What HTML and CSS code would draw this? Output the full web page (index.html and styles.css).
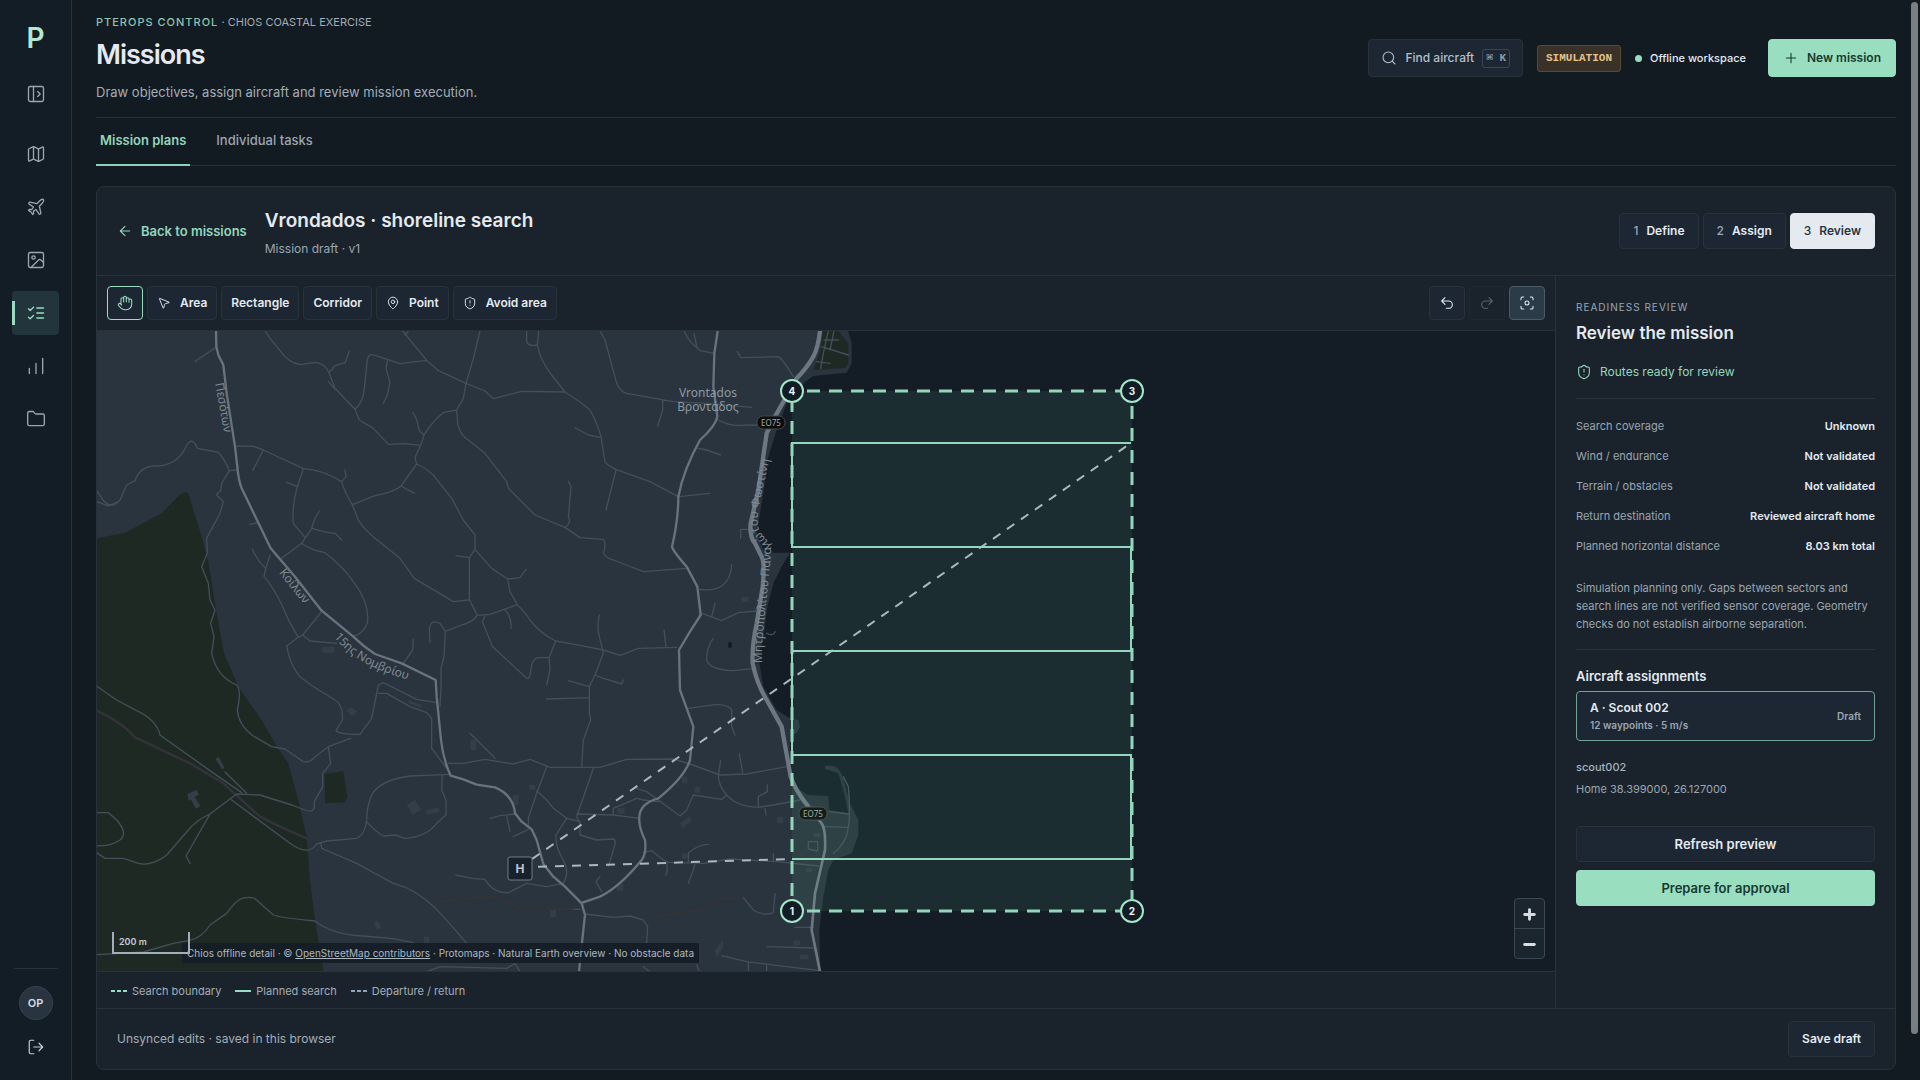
FILE: index.html
```html
<!DOCTYPE html>
<html lang="en">
<head>
<meta charset="utf-8">
<title>Missions · Pterops Control</title>
<meta name="viewport" content="width=device-width, initial-scale=1">
<link rel="stylesheet" href="styles.css">
</head>
<body>
<div class="app">
  <aside class="rail">
    <a class="logo" href="#" aria-label="Pterops home">P</a>
    <button class="rail-item rail-toggle" type="button" aria-label="Expand sidebar"><svg class="icon" viewBox="0 0 24 24"><rect x="3" y="3" width="18" height="18" rx="2"/><path d="M9 3v18M14 9l3 3-3 3"/></svg></button>
    <nav class="rail-nav" aria-label="Main">
      <a class="rail-item" href="#" aria-label="Map"><svg class="icon" viewBox="0 0 24 24"><path d="M14.106 5.553a2 2 0 0 0 1.788 0l3.659-1.83A1 1 0 0 1 21 4.619v12.764a1 1 0 0 1-.553.894l-4.553 2.277a2 2 0 0 1-1.788 0l-4.212-2.106a2 2 0 0 0-1.788 0l-3.659 1.83A1 1 0 0 1 3 19.381V6.618a1 1 0 0 1 .553-.894l4.553-2.277a2 2 0 0 1 1.788 0zM15 5.764v15M9 3.236v15"/></svg></a>
      <a class="rail-item" href="#" aria-label="Aircraft"><svg class="icon" viewBox="0 0 24 24"><path d="M17.8 19.2 16 11l3.5-3.5C21 6 21.5 4 21 3c-1-.5-3 0-4.5 1.500L13 8 4.800 6.200c-.5-.1-.9.1-1.100.5l-.3.5c-.2.5-.1 1 .3 1.300L9 12l-2 3H4l-1 1 3 2 2 3 1-1v-3l3-2 3.500 5.300c.3.4.8.5 1.300.3l.5-.2c.4-.3.6-.7.500-1.200z"/></svg></a>
      <a class="rail-item" href="#" aria-label="Imagery"><svg class="icon" viewBox="0 0 24 24"><rect x="3" y="3" width="18" height="18" rx="2"/><circle cx="9" cy="9" r="2"/><path d="m21 15-3.086-3.086a2 2 0 0 0-2.828 0L6 21"/></svg></a>
      <a class="rail-item is-active" href="#" aria-label="Missions" aria-current="page"><svg class="icon" viewBox="0 0 24 24"><path d="m3 17 2 2 4-4M3 7l2 2 4-4M13 6h8M13 12h8M13 18h8"/></svg></a>
      <a class="rail-item" href="#" aria-label="Reports"><svg class="icon" viewBox="0 0 24 24"><path d="M4 21v-6M12 21V9M20 21V3"/></svg></a>
      <a class="rail-item" href="#" aria-label="Files"><svg class="icon" viewBox="0 0 24 24"><path d="M20 20a2 2 0 0 0 2-2V8a2 2 0 0 0-2-2h-7.900a2 2 0 0 1-1.690-.9L9.600 3.900A2 2 0 0 0 7.930 3H4a2 2 0 0 0-2 2v13a2 2 0 0 0 2 2Z"/></svg></a>
    </nav>
    <div class="rail-foot">
      <span class="avatar">OP</span>
      <button class="signout" type="button" aria-label="Sign out"><svg class="icon" viewBox="0 0 24 24"><path d="M9 21H5a2 2 0 0 1-2-2V5a2 2 0 0 1 2-2h4M16 17l5-5-5-5M21 12H9"/></svg></button>
    </div>
  </aside>

  <main class="main">
    <header class="page-head">
      <div>
        <p class="eyebrow"><strong>PTEROPS CONTROL</strong> <span>· CHIOS COASTAL EXERCISE</span></p>
        <h1>Missions</h1>
        <p class="lede">Draw objectives, assign aircraft and review mission execution.</p>
      </div>
      <div class="head-actions">
        <button class="find" type="button"><svg class="icon" viewBox="0 0 24 24"><circle cx="11" cy="11" r="8"/><path d="m21 21-4.300-4.300"/></svg>Find aircraft <kbd>⌘ K</kbd></button>
        <span class="badge">SIMULATION</span>
        <span class="workspace">Offline workspace</span>
        <button class="primary new-mission" type="button"><svg class="icon" viewBox="0 0 24 24"><path d="M5 12h14M12 5v14"/></svg>New mission</button>
      </div>
    </header>

    <nav class="tabs" aria-label="Mission views">
      <a class="tab is-active" href="#" aria-current="page">Mission plans</a>
      <a class="tab" href="#">Individual tasks</a>
    </nav>

    <section class="card">
      <header class="card-head">
        <a class="back" href="#"><svg class="icon" viewBox="0 0 24 24"><path d="m12 19-7-7 7-7M19 12H5"/></svg>Back to missions</a>
        <div class="card-title">
          <h2>Vrondados · shoreline search</h2>
          <p>Mission draft · v1</p>
        </div>
        <div class="steps">
          <button class="btn" type="button"><span>1</span>Define</button>
          <button class="btn" type="button"><span>2</span>Assign</button>
          <button class="btn is-current" type="button" aria-current="step"><span>3</span>Review</button>
        </div>
      </header>

      <div class="workspace-grid">
        <div class="map-col">
          <div class="toolbar">
            <button class="btn tool square is-on" type="button" aria-label="Pan"><svg class="icon" viewBox="0 0 24 24"><path d="M18 11V6a2 2 0 0 0-4 0M14 10V4a2 2 0 0 0-4 0v2M10 10.500V6a2 2 0 0 0-4 0v8M18 8a2 2 0 1 1 4 0v6a8 8 0 0 1-8 8h-2c-2.800 0-4.500-.86-5.990-2.340l-3.600-3.600a2 2 0 0 1 2.830-2.820L7 15"/></svg></button>
            <button class="btn tool" type="button"><svg class="icon" viewBox="0 0 24 24"><path d="M4.037 4.688a.495.495 0 0 1 .651-.651l16 6.500a.5.5 0 0 1-.063.947l-6.124 1.580a2 2 0 0 0-1.438 1.435l-1.579 6.126a.5.5 0 0 1-.947.063z"/></svg>Area</button>
            <button class="btn tool" type="button">Rectangle</button>
            <button class="btn tool" type="button">Corridor</button>
            <button class="btn tool" type="button"><svg class="icon" viewBox="0 0 24 24"><path d="M20 10c0 4.993-5.539 10.193-7.399 11.799a1 1 0 0 1-1.202 0C9.539 20.193 4 14.993 4 10a8 8 0 0 1 16 0"/><circle cx="12" cy="10" r="3"/></svg>Point</button>
            <button class="btn tool" type="button"><svg class="icon" viewBox="0 0 24 24"><path d="M20 13c0 5-3.500 7.500-7.660 8.950a1 1 0 0 1-.67-.01C7.500 20.500 4 18 4 13V6a1 1 0 0 1 1-1c2 0 4.500-1.200 6.240-2.720a1.170 1.170 0 0 1 1.520 0C14.510 3.810 17 5 19 5a1 1 0 0 1 1 1zM12 8v4M12 16h.01"/></svg>Avoid area</button>
            <div class="tool-end">
              <button class="btn tool square" type="button" aria-label="Undo"><svg class="icon" viewBox="0 0 24 24"><path d="M9 14 4 9l5-5M4 9h10.500a5.500 5.500 0 0 1 0 11H11"/></svg></button>
              <button class="btn tool square" type="button" aria-label="Redo" disabled><svg class="icon" viewBox="0 0 24 24"><path d="m15 14 5-5-5-5M20 9H9.500a5.500 5.500 0 0 0 0 11H13"/></svg></button>
              <button class="btn tool square is-lit" type="button" aria-label="Fit to mission"><svg class="icon" viewBox="0 0 24 24"><circle cx="12" cy="12" r="3"/><path d="M3 7V5a2 2 0 0 1 2-2h2M17 3h2a2 2 0 0 1 2 2v2M21 17v2a2 2 0 0 1-2 2h-2M7 21H5a2 2 0 0 1-2-2v-2"/></svg></button>
            </div>
          </div>

          <div class="map">
            <svg class="map-canvas" viewBox="97 331 1458 640" preserveAspectRatio="xMinYMin slice" role="img" aria-label="Map of Vrontados with the planned search area">
              <!-- land, parks and roads are drawn on a tripled grid -->
              <g transform="translate(80 320) scale(.333333)">
                <path class="land" d="M0 0H2295L2315 70V130L2300 158 2200 168 2172 188 2120 250 2090 330 2062 420 2050 520 2030 640 2050 690 2070 698H2130L2105 740 2080 790 2062 860 2050 950 2035 1010 2050 1100 2090 1170 2130 1195 2155 1200 2160 1220 2150 1238 2130 1250V1330L2145 1400 2185 1425 2245 1428 2248 1470 2305 1480 2295 1430 2275 1360 2235 1347Q2230 1332 2262 1338 2280 1345 2290 1375L2310 1450 2335 1500V1545L2315 1600 2260 1620 2245 1650 2230 1730 2218 1830 2222 1990H0Z"/>
                <path class="park" d="M0 660 50 655 135 638 245 580 295 528Q315 512 325 520L362 640 385 725 410 880 432 1000 475 1100 545 1200 590 1280 625 1330 655 1440 680 1550 690 1680 705 1800 735 1980H0ZM734 1362 790 1353 802 1430 795 1447 735 1450ZM2228 33H2275L2305 70V128L2296 144 2200 150 2222 90Z"/>
                <g class="building">
                  <path d="M727 980h36v18h-36zM798 1170l16-8 18 12-16 16zM980 1455l24-16 20 30-26 16zM1040 1470l38-8v14l-38 8zM322 1422l28-12 6 14-12 8 18 26-14 8-16-28-6 4zM406 1316l10-6 18 34-8 4zM880 1808l14-6 10 24h-14zM1032 1850h16v18h-16zM1172 1260h16v30h-16zM1410 1765h18v26h-18zM1348 1395h18v14h-18zM1298 1425h18v30h-18zM1800 1510l30-22 4 14-26 24zM2092 1490h18v20h-18zM1984 830h22v16h-22zM1806 1370h16v18h-16zM1844 1400h16v18h-16zM1612 1465h22v16h-22zM1806 1600h16v16h-16zM1610 1692h20v20h-20zM2200 1538h22v14h-22zM2178 1645h18v12h-18zM1905 1890l24-30v20l-18 34zM2140 1862h20v14h-20zM2160 1904h26v14h-26zM985 1140l40 14v10l-40-14z"/>
                </g>
                <g class="track">
                  <path d="M50 1172Q130 1210 165 1252L330 1330 430 1390 490 1445 540 1490 600 1520 680 1555M1060 1745 1240 1730 1320 1765 1500 1768M1720 1790 1860 1770 1920 1735 1990 1735"/>
                </g>
                <g class="minor">
                  <path d="M556 33 570 55 600 92Q625 128 660 134L705 127Q735 130 747 158L765 205 825 268 838 300 880 325 925 373 975 371 1022 376 1032 345Q1060 300 1092 277L1130 270 1150 235 1158 190 1180 115 1200 33"/>
                  <path d="M747 158 765 137 795 128 808 93M745 185 768 210M825 268Q850 245 853 205L862 120Q865 98 885 106L960 131 1040 121M922 122 918 145 930 187 922 225 910 250M968 33 1040 121 1075 152 1158 190 1215 213 1240 236 1325 214 1455 216M975 45 985 33M1340 33V65Q1345 80 1372 75M1376 33 1372 75Q1380 120 1415 165L1455 216 1500 246 1530 270Q1550 305 1563 350L1575 425Q1580 435 1607 448L1710 485 1795 530"/>
                  <path d="M1130 270 1133 310Q1140 345 1165 360L1215 400 1280 485 1285 505 1365 585 1455 622 1500 653 1570 658Q1580 670 1570 700 1580 715 1600 720L1690 755 1820 745M1455 622Q1475 610 1465 590L1473 500 1465 483M998 277Q1010 290 1018 332L1032 345M1022 376 1005 412 1010 432 963 498Q945 515 885 527L817 554M963 498 1003 520"/>
                  <path d="M1010 432Q1050 450 1070 478L1115 535 1150 600 1185 645V688L1168 713V838L1192 886 1230 883 1312 854 1340 885 1350 900Q1380 940 1427 963L1500 976 1570 990 1620 1006 1675 985 1790 982M1185 688 1235 745 1283 777 1320 773 1338 748M1283 777 1290 815 1312 854M1128 707 1168 713M1192 886Q1180 905 1145 915L1096 934 1092 1010 1083 1045V1100L1080 1160M1096 934 1080 910Q1050 895 1048 930L1050 968M1275 870Q1295 890 1293 925M1215 888 1207 905 1238 980 1340 1075Q1350 1078 1352 1055 1355 1015 1375 1013H1407L1427 963M1407 1013 1410 1050 1400 1095"/>
                  <path d="M470 378 520 379 550 390 670 446Q730 450 785 485 795 520 817 554L835 600Q850 625 885 655L960 715 1003 775 1120 845 1165 840M550 390 518 452M670 446 652 500Q635 560 640 610L675 652M620 487 652 500M785 485 798 470 795 450M605 715 665 670 695 625 705 595 718 573M695 625 740 637 765 640 785 660M665 670Q690 690 735 698 790 740 820 785 870 850 862 910 850 940 823 948M517 687Q530 720 557 745L570 705M557 745 552 770Q580 800 608 860L628 905 655 952 620 978 625 1000Q635 1040 660 1070L700 1100 765 1140Q790 1155 787 1200L768 1232Q775 1243 840 1243L875 1195 895 1095 910 1088 1010 1138 1070 1148M655 952 668 945 725 875M668 945 690 963 770 970M895 1120 920 1120 990 1160 1040 1178 1055 1195V1285L1100 1345M510 613 535 608M1000 958 998 990 970 1030M345 124 408 82"/>
                  <path d="M50 512 62 530Q90 575 120 540L140 495 165 482Q180 440 220 438 290 440 318 380 335 345 352 385L410 396Q425 400 448 452L470 450M50 545 85 558 115 545M448 452 425 490 423 510 410 525 430 545 420 580 380 655 382 700 365 740 385 790 390 840 405 870 392 910 402 950 395 1000Q410 1070 470 1095 485 1110 472 1170 475 1215 520 1248L575 1280 615 1287 670 1325Q690 1330 705 1310L745 1280 812 1255M745 1280 752 1330 728 1360V1400L703 1445V1460Q700 1480 675 1470L635 1455 540 1425 470 1422 390 1482Q350 1500 325 1530L260 1605Q215 1640 175 1630L130 1615H75L50 1598M390 1482 318 1608 330 1630M50 1098Q80 1120 110 1140L170 1172Q230 1200 240 1245L380 1345 485 1418M435 1356 500 1420M50 1478H85L110 1500Q145 1540 120 1560 90 1580 50 1577M455 1440 630 1570Q685 1610 710 1572L740 1563 830 1555Q855 1545 860 1500 860 1460 875 1425 900 1380 990 1368L1110 1363M1087 1365 1085 1410 1098 1440V1485L1070 1510Q1040 1550 975 1555L945 1545 910 1548Q880 1530 860 1505M722 1570 725 1585 830 1630 940 1690Q1020 1710 1090 1790L1130 1835 1160 1870"/>
                  <path d="M50 1904 190 1896 280 1870 325 1862Q365 1855 390 1815L440 1780Q475 1730 500 1733 520 1730 530 1740L580 1785Q595 1792 705 1803 760 1845 850 1848L940 1856 1000 1868M1040 1955 1080 1940 1280 1945 1305 1930 1320 1955M1105 1330H1150L1215 1318 1300 1332 1350 1318 1410 1342H1560L1640 1318 1780 1317 1830 1332 1920 1365 2000 1362 2120 1340M1170 1240 1245 1315M1400 1340 1370 1420 1345 1495V1520M1370 1412 1400 1440 1420 1465 1460 1495 1500 1505M1460 1495 1428 1545Q1425 1580 1450 1620 1470 1660 1450 1690M1230 1495 1260 1487 1305 1482M1280 1487 1290 1535M1300 1550 1345 1528M1127 1665 1180 1676 1215 1678Q1240 1720 1285 1718L1340 1690 1400 1700 1450 1690M1540 1345 1490 1490 1500 1510V1545L1550 1560 1600 1557Q1610 1560 1603 1580L1585 1640M1490 1482 1600 1485 1680 1495M1600 1485V1465L1670 1435 1690 1440 1735 1445M1670 1405 1700 1415 1735 1440 1800 1488 1820 1470 1840 1425 1925 1438 1940 1425M1915 1365Q1915 1400 1945 1430 1975 1460 2035 1462L2080 1455 2160 1440M1922 1322 1915 1365M1978 1302 1988 1358M2035 1460V1430L2062 1415V1395M2055 1465 2058 1485"/>
                  <path d="M1690 1598 1715 1592 1750 1620 1765 1627 1870 1630 1950 1617 2090 1625 2215 1638M1825 1625V1600Q1850 1575 1885 1573M1845 1630 1840 1650 1825 1690M1760 1625 1762 1650 1758 1665M2080 1625V1600M1565 1715 1548 1685 1560 1670M1515 1782 1600 1792 1650 1788 1690 1800 1703 1820 1700 1870M1500 1768H1480M1990 1733 2020 1770Q2050 1790 2080 1778M2080 1775 2085 1720M2145 1822H2200M2062 1880 2200 1884M1925 1907 2000 1925 2120 1940 2220 1952M2005 1925V1955M2060 1935V1955M1850 1935 1858 1955M1690 1940 1710 1955"/>
                  <path d="M1558 885Q1550 920 1558 950L1570 1000 1545 1065 1528 1100V1180L1532 1200 1510 1260 1505 1340M1545 1065 1570 1075 1625 1092 1630 1080M1465 1082 1528 1100M1400 1137 1528 1133M1752 930 1758 980M1560 33 1575 60 1610 190Q1620 215 1640 220L1780 245 1880 250 2015 262M1748 240V270L1733 318M1608 450 1578 570M1485 323 1525 345 1560 352M1910 297Q1940 315 1970 316L2035 315M1855 385 1880 390 1922 405M1797 530 1890 520M1812 33Q1830 70 1848 80L1860 92 1903 100M1842 40 1850 80M1972 95 1982 113 2095 110Q2110 120 2140 170M1825 1165 1910 1153Q1950 1155 1955 1170V1220L1965 1245M1858 808Q1950 820 1955 735M1860 878 1925 902 1975 878 2030 873M1895 890 1905 850M2030 1045 1960 1052Q1890 1050 1880 1020 1880 980 1900 955M2060 940Q2080 950 2085 935M2005 628H1982V655M2234 1520 2305 1522Q2312 1480 2305 1400L2290 1370M2248 1475 2305 1482M2305 1522Q2300 1570 2260 1600M2185 1565h28v28l-28-6zM2245 33 2232 90 2222 145M2225 80 2305 105M2232 60 2275 60M2210 125 2250 130M2262 33 2250 90"/>
                </g>
                <g class="main-road">
                  <path d="M408 33 409 80 415 105 430 135 440 220 465 380 472 440Q475 480 485 505L572 685 645 770 725 872 820 950Q850 980 885 1002L965 1030 1067 1080 1070 1130 1083 1260Q1090 1320 1112 1367L1150 1378 1190 1394 1245 1402Q1300 1425 1305 1480L1325 1505 1355 1528 1370 1560 1390 1632 1420 1670 1455 1700 1505 1750 1515 1785 1510 1830 1497 1955"/>
                  <path d="M1913 33 1903 100 1900 200 1912 290Q1905 320 1860 360 1810 450 1795 530 1795 600 1776 680 1780 695 1820 740L1852 800 1862 885 1830 935 1797 990 1800 1110 1840 1220 1830 1320Q1815 1370 1735 1435 1680 1450 1678 1490 1675 1520 1695 1560 1700 1600 1685 1620 1620 1700 1560 1730L1507 1748"/>
                </g>
                <g class="shore-road">
                  <path d="M2220 33Q2215 80 2200 110 2180 145 2150 175L2085 290 2060 340Q2045 440 2035 510L2012 610Q2008 650 2025 670L2045 710Q2055 730 2048 800L2030 910Q2015 980 2018 1030 2030 1090 2060 1140L2105 1220 2132 1370Q2145 1410 2185 1460"/>
                  <path class="shore-thin" d="M2180 1455 2225 1510Q2238 1530 2235 1590L2205 1720 2195 1830 2220 1955"/>
                </g>
              </g>

              <g class="place">
                <text x="708" y="397">Vrontados</text>
                <text x="708" y="411">Βροντάδος</text>
              </g>
              <path id="r1" class="guide" d="M215 384 Q219 403 227 450"/>
              <path id="r2" class="guide" d="M279 573 Q293 591 312 613"/>
              <path id="r3" class="guide" d="M334 637 C352 659 375 672 425 684"/>
              <path id="r4" class="guide" d="M762 663 C761 640 768 590 771 555 C773 535 755 540 758 515 C760 495 767 475 775 430"/>
              <g class="street">
                <text><textPath href="#r1">Πεσότων</textPath></text>
                <text><textPath href="#r2">Κοίλων</textPath></text>
                <text><textPath href="#r3">15ης Νομβρίου</textPath></text>
                <text><textPath href="#r4">Μητροπολίτου Παναγιώτου Φωστίνη</textPath></text>
              </g>
              <g class="shield">
                <rect x="757" y="416" width="28" height="13" rx="6" ry="6"/><text x="771" y="426">EO75</text>
              </g>
              <g class="shield">
                <rect x="799" y="807" width="28" height="13" rx="6" ry="6"/><text x="813" y="817">EO75</text>
              </g>
              <rect class="pond" x="728" y="642" width="4" height="6" rx="2"/>

              <rect class="area" x="792" y="391" width="340" height="520"/>
              <path class="transit" d="M532 867 792 859M1131 443 532 859"/>
              <path class="boundary" d="M804 391H1120M1132 403V899M804 911H1120M792 899V403"/>
              <path class="sweep" d="M792 859H1131V755H792V651H1131V547H792V443H1131"/>
              <g class="vertex">
                <circle cx="792" cy="911" r="11"/><text x="792" y="915">1</text>
                <circle cx="1132" cy="911" r="11"/><text x="1132" y="915">2</text>
                <circle cx="1132" cy="391" r="11"/><text x="1132" y="395">3</text>
                <circle cx="792" cy="391" r="11"/><text x="792" y="395">4</text>
              </g>
              <g class="home">
                <rect x="508" y="857" width="24" height="23" rx="2"/><text x="520" y="873">H</text>
              </g>
            </svg>
            <p class="credit">Chios offline detail · © <a href="#">OpenStreetMap contributors</a> · Protomaps · Natural Earth overview · No obstacle data</p>
            <div class="scale">200 m</div>
            <div class="zoom">
              <button type="button" aria-label="Zoom in"><svg viewBox="0 0 30 29"><path d="M15 10v10M10 15h10"/></svg></button>
              <button type="button" aria-label="Zoom out"><svg viewBox="0 0 30 29"><path d="M10 15h10"/></svg></button>
            </div>
          </div>

          <ul class="legend">
            <li><svg viewBox="0 0 16 4" class="key key-green"><path d="M0 2h16" stroke-dasharray="4 2"/></svg>Search boundary</li>
            <li><svg viewBox="0 0 16 4" class="key key-green"><path d="M0 2h16"/></svg>Planned search</li>
            <li><svg viewBox="0 0 16 4" class="key key-grey"><path d="M0 2h16" stroke-dasharray="4 2"/></svg>Departure / return</li>
          </ul>
        </div>

        <aside class="panel">
          <p class="panel-label">READINESS REVIEW</p>
          <h2>Review the mission</h2>
          <p class="status"><svg class="icon" viewBox="0 0 24 24"><path d="M20 13c0 5-3.500 7.500-7.660 8.950a1 1 0 0 1-.67-.01C7.500 20.500 4 18 4 13V6a1 1 0 0 1 1-1c2 0 4.500-1.200 6.240-2.720a1.170 1.170 0 0 1 1.520 0C14.510 3.810 17 5 19 5a1 1 0 0 1 1 1zM12 8v4M12 16h.01"/></svg>Routes ready for review</p>
          <dl class="facts">
            <div><dt>Search coverage</dt><dd>Unknown</dd></div>
            <div><dt>Wind / endurance</dt><dd>Not validated</dd></div>
            <div><dt>Terrain / obstacles</dt><dd>Not validated</dd></div>
            <div><dt>Return destination</dt><dd>Reviewed aircraft home</dd></div>
            <div><dt>Planned horizontal distance</dt><dd>8.03 km total</dd></div>
          </dl>
          <p class="note">Simulation planning only. Gaps between sectors and search lines are not verified sensor coverage. Geometry checks do not establish airborne separation.</p>
          <h3>Aircraft assignments</h3>
          <button class="assignment" type="button">
            <span><strong>A · Scout 002</strong><small>12 waypoints · 5 m/s</small></span>
            <small>Draft</small>
          </button>
          <p class="callsign">scout002</p>
          <p class="home-pos">Home 38.399000, 26.127000</p>
          <div class="panel-actions">
            <button class="btn wide" type="button">Refresh preview</button>
            <button class="primary wide" type="button">Prepare for approval</button>
          </div>
        </aside>
      </div>

      <footer class="card-foot">
        <p>Unsynced edits · saved in this browser</p>
        <button class="btn save" type="button">Save draft</button>
      </footer>
    </section>
  </main>
  <div class="scroll-thumb" aria-hidden="true"></div>
</div>
</body>
</html>
```
FILE: styles.css
```css
:root {
  --bg: #121a22;
  --rail: #131d25;
  --surface: #1a232c;
  --raised: #1c2733;
  --line: #27323b;
  --text: #e4eaf0;
  --muted: #9ba6b1;
  --mint: #98ddbf;
}
* { box-sizing: border-box; }
body, h1, h2, h3, p, ul, dl, dd { margin: 0; padding: 0; }
body {
  background: var(--bg);
  color: var(--text);
  font: 400 12px/18px Inter, "Liberation Sans", sans-serif;
}
button { font: inherit; color: inherit; cursor: pointer; }
a { color: inherit; text-decoration: none; }
.icon {
  width: 16px;
  height: 16px;
  flex: none;
  fill: none;
  stroke: currentColor;
  stroke-width: 1.6;
  stroke-linecap: round;
  stroke-linejoin: round;
}
.app { display: flex; height: 100vh; }

/* Navigation rail */
.rail {
  width: 72px;
  flex: none;
  display: flex;
  flex-direction: column;
  align-items: center;
  padding: 20px 12px 22px;
  background: var(--rail);
  border-right: 1px solid var(--line);
}
.logo { font-size: 28px; line-height: 36px; font-weight: 600; color: #b5e8cf; }
.rail-item {
  position: relative;
  display: flex;
  align-items: center;
  justify-content: center;
  width: 47px;
  height: 44px;
  padding: 0;
  border: 0;
  border-radius: 4px;
  background: none;
  color: var(--muted);
}
.rail-item .icon { width: 20px; height: 20px; }
.rail-toggle { margin-top: 16px; }
.rail-nav { display: flex; flex-direction: column; gap: 9px; margin-top: 16px; }
.rail-item.is-active { background: #22353d; color: var(--mint); }
.rail-item.is-active::before {
  content: "";
  position: absolute;
  left: 0;
  top: 10px;
  bottom: 10px;
  width: 3px;
  background: var(--mint);
}
.rail-foot {
  margin-top: auto;
  width: 44px;
  padding-top: 17px;
  border-top: 1px solid var(--line);
  display: flex;
  flex-direction: column;
  align-items: center;
  gap: 16px;
}
.avatar {
  width: 34px;
  height: 34px;
  border-radius: 50%;
  border: 1px solid #35434e;
  background: #283540;
  font-size: 11px;
  line-height: 32px;
  font-weight: 600;
  text-align: center;
  color: #d5dce3;
}
.signout { display: flex; padding: 2px; border: 0; background: none; color: #c3ccd4; }
.signout .icon { width: 18px; height: 18px; }

/* Page header */
.main { flex: 1; min-width: 0; padding: 0 24px 56px; overflow-y: auto; scrollbar-width: none; }
.page-head {
  display: flex;
  align-items: center;
  justify-content: space-between;
  gap: 24px;
  padding: 14px 0 15px;
  border-bottom: 1px solid var(--line);
}
.eyebrow { font-size: 11px; line-height: 16px; color: #a3adb7; }
.eyebrow strong { font-weight: 500; letter-spacing: 1px; color: #8fc5b0; }
h1 { margin-top: 8px; font-size: 27px; line-height: 34px; font-weight: 600; letter-spacing: -1px; }
.lede { margin-top: 10px; font-size: 13px; line-height: 20px; color: #a3adb7; }
.head-actions { display: flex; align-items: center; gap: 14px; }
.find {
  display: flex;
  align-items: center;
  gap: 8px;
  height: 38px;
  padding: 0 12px;
  border: 1px solid var(--line);
  border-radius: 4px;
  background: var(--raised);
  font-weight: 500;
  color: #b5bfc8;
}
.find kbd {
  padding: 0 3px;
  border: 1px solid #3a4651;
  border-radius: 3px;
  font: 600 11px/17px "Liberation Mono", "DejaVu Sans Mono", monospace;
  color: #8f9ba6;
}
.badge {
  padding: 0 8px;
  border: 1px solid #574a35;
  border-radius: 3px;
  background: #3a3228;
  font: 700 11px/25px "Liberation Mono", monospace;
  color: #e5c48a;
}
.workspace { display: flex; align-items: center; gap: 8px; margin-right: 8px; font-size: 11px; font-weight: 500; }
.workspace::before { content: ""; width: 7px; height: 7px; border-radius: 50%; background: var(--mint); }
.primary {
  border: 1px solid var(--mint);
  border-radius: 4px;
  background: #98debf;
  color: #163a30;
  font-size: 12px;
  font-weight: 600;
}
.new-mission { display: flex; align-items: center; gap: 8px; height: 38px; padding: 0 14px; }

/* Tabs */
.tabs { display: flex; gap: 22px; border-bottom: 1px solid var(--line); }
.tab {
  margin-bottom: -1px;
  padding: 12px 4px 14px;
  border-bottom: 2px solid transparent;
  font-size: 13px;
  line-height: 20px;
  font-weight: 500;
  color: var(--muted);
}
.tab.is-active { border-color: #8fd0b8; font-weight: 600; color: #93d6bb; }

/* Mission card */
.card { margin-top: 20px; border: 1px solid var(--line); border-radius: 8px; background: var(--surface); overflow: hidden; }
.card-head {
  display: flex;
  align-items: center;
  gap: 18px;
  padding: 16px 20px;
  border-bottom: 1px solid var(--line);
}
.back { display: flex; align-items: center; gap: 8px; font-size: 13px; font-weight: 600; color: #93d6bb; }
.card-title { padding-top: 4px; }
.card-title h2 { font-size: 19px; line-height: 28px; font-weight: 600; }
.card-title p { margin-top: 4px; line-height: 20px; color: var(--muted); }
.steps { display: flex; gap: 4px; margin-left: auto; }
.btn {
  display: flex;
  align-items: center;
  justify-content: center;
  gap: 8px;
  height: 36px;
  padding: 0 13px;
  border: 1px solid var(--line);
  border-radius: 4px;
  background: var(--raised);
  font-weight: 600;
}
.steps span { font-weight: 500; color: var(--muted); }
.steps .is-current, .steps .is-current span { color: #2b3640; }
.steps .is-current { border-color: #e4eaf0; background: #e4eaf0; }

.workspace-grid { display: grid; grid-template-columns: minmax(0, 1fr) 340px; }
.toolbar { display: flex; gap: 4px; padding: 10px; border-bottom: 1px solid var(--line); }
.tool { gap: 9px; height: 34px; padding: 0 9px; }
.tool .icon { width: 14px; height: 14px; }
.square { width: 36px; padding: 0; }
.square .icon { width: 16px; height: 16px; }
.tool.is-on { border-color: var(--mint); color: var(--mint); }
.tool.is-lit { border-color: #4a5b67; background: #2b3c48; }
.tool:disabled { background: none; border-color: #1f2932; color: #58636d; }
.tool-end { display: flex; gap: 4px; margin-left: auto; }

/* Map */
.map { position: relative; height: 640px; background: #141d26; overflow: hidden; }
.map-canvas { display: block; width: 100%; height: 100%; }
.land { fill: #29343e; }
.park { fill: #1f2924; }
.building { fill: #333e48; }
.pond { fill: #141d26; }
.track, .minor, .main-road, .shore-road { fill: none; stroke-linejoin: round; stroke-linecap: round; }
.track { stroke: #333339; stroke-width: 7; }
.minor { stroke: #434f59; stroke-width: 4; }
.main-road { stroke: #68737d; stroke-width: 7; }
.shore-road { stroke: #6d7781; stroke-width: 13; }
.shore-thin { stroke-width: 8; }
.map-canvas text { font-family: "Noto Sans", sans-serif; text-anchor: middle; }
.place text { font-size: 12px; fill: #8e99a3; }
.guide { fill: none; }
.map-canvas .street text { font-size: 12px; text-anchor: start; fill: #7f8a94; }
.shield rect { fill: #0b0d0f; stroke: #4a4644; }
.shield text { font-size: 8px; fill: #a8a8a6; }
.area { fill: #5fd0a0; fill-opacity: .09; }
.boundary { fill: none; stroke: #93d6bb; stroke-width: 3; stroke-dasharray: 13 9; stroke-dashoffset: -3; }
.sweep { fill: none; stroke: #93d6bb; stroke-width: 2; }
.transit { fill: none; stroke: #aab8c0; stroke-width: 2; stroke-dasharray: 9 8; stroke-dashoffset: -6; }
.vertex circle { fill: #121c25; stroke: #a5e6cb; stroke-width: 2; }
.map-canvas .vertex text, .map-canvas .home text { font-family: Inter, sans-serif; font-weight: 700; fill: #eef3f7; }
.vertex text { font-size: 10px; }
.home rect { fill: #17222d; stroke: #707c88; }
.map-canvas .home text { font-size: 12px; fill: #b7c5d0; }
.scale {
  position: absolute;
  left: 15px;
  bottom: 17px;
  width: 78px;
  height: 22px;
  padding-left: 5px;
  border: 2px solid #a3aeb8;
  border-top: 0;
  font-size: 9px;
  line-height: 20px;
  font-weight: 600;
  color: #c3ccd4;
}
.credit {
  position: absolute;
  left: 85px;
  bottom: 8px;
  padding: 0 5px;
  background: rgba(20, 29, 38, .9);
  font-size: 10px;
  line-height: 20px;
  color: #adb7c0;
}
.credit a { text-decoration: underline; }
.zoom {
  position: absolute;
  right: 10px;
  bottom: 12px;
  width: 31px;
  border: 1px solid #3b4852;
  border-radius: 4px;
  background: #1a252e;
}
.zoom button { display: block; width: 100%; height: 29px; padding: 0; border: 0; background: none; }
.zoom button + button { height: 30px; border-top: 1px solid #3b4852; }
.zoom svg { display: block; width: 29px; height: 28px; fill: none; stroke: #d8dddf; stroke-width: 3; stroke-linecap: round; }
.legend {
  display: flex;
  gap: 14px;
  padding: 10px 14px 8px;
  border-top: 1px solid var(--line);
  list-style: none;
  font-size: 11px;
  color: #a3adb7;
}
.legend li { display: flex; align-items: center; gap: 5px; }
.key { width: 16px; height: 4px; stroke-width: 2; }
.key-green { stroke: var(--mint); }
.key-grey { stroke: #8fa5b5; }

/* Review panel */
.panel { padding: 23px 20px; border-left: 1px solid var(--line); font-size: 11px; }
.panel-label { line-height: 16px; font-size: 10px; letter-spacing: 1px; color: var(--muted); }
.panel h2 { margin-top: 6px; font-size: 17px; line-height: 24px; font-weight: 600; }
.status {
  display: flex;
  align-items: center;
  gap: 8px;
  margin-top: 17px;
  padding-bottom: 16px;
  border-bottom: 1px solid var(--line);
  font-size: 12px;
  line-height: 20px;
  color: #93d6bb;
}
.facts { margin: 12px 0 18px; }
.facts div { display: flex; justify-content: space-between; line-height: 30px; }
.facts dt { color: var(--muted); }
.facts dd { font-weight: 600; }
.note { padding-bottom: 16px; border-bottom: 1px solid var(--line); color: var(--muted); }
.panel h3 { margin-top: 16px; font-size: 13px; line-height: 20px; font-weight: 600; }
.assignment {
  display: flex;
  align-items: center;
  justify-content: space-between;
  width: 100%;
  margin-top: 5px;
  padding: 7px 13px;
  border: 1px solid #6fa395;
  border-radius: 4px;
  background: var(--raised);
  text-align: left;
}
.assignment strong { display: block; font-size: 12px; line-height: 18px; font-weight: 600; }
.assignment small { display: block; font-size: 10px; line-height: 16px; font-weight: 600; color: var(--muted); }
.callsign { margin-top: 17px; font-weight: 500; color: #a8b2bc; }
.home-pos { margin-top: 4px; color: var(--muted); }
.panel-actions { display: grid; gap: 8px; margin-top: 28px; }
.wide { height: 36px; font-size: 13px; }

.card-foot {
  display: flex;
  align-items: center;
  justify-content: space-between;
  padding: 12px 20px;
  border-top: 1px solid var(--line);
  color: #a3adb7;
}
.card-foot .btn { color: var(--text); }

.scroll-thumb {
  position: absolute;
  top: 2px;
  right: 2px;
  bottom: 46px;
  width: 7px;
  border-radius: 4px;
  background: #7a7f84;
}
```
